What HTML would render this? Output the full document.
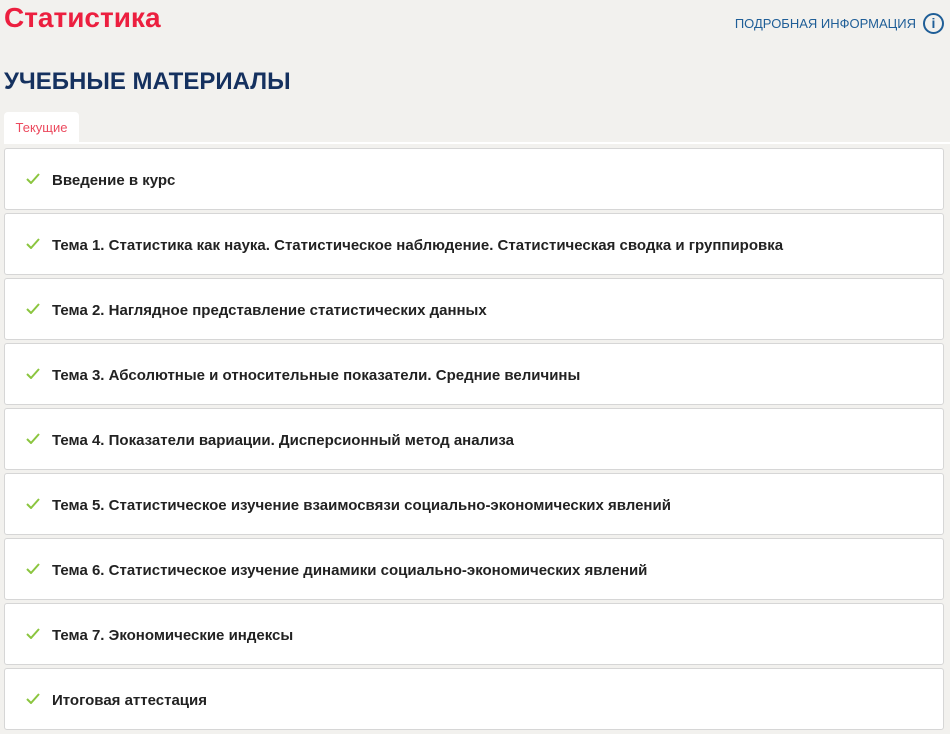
<!DOCTYPE html>
<html><head><meta charset="utf-8"><style>
body{margin:0;background:#f2f1ee;font-family:"Liberation Sans",sans-serif;width:950px;height:734px;overflow:hidden;position:relative}
.t{position:absolute;left:4px;top:2px;font-size:28px;color:#ec1f3f;font-weight:bold;letter-spacing:0px}
.info{position:absolute;right:34px;top:16px;font-size:13px;color:#1f5e97}
.ic{position:absolute;left:923px;top:13px;width:17px;height:17px;border:2px solid #1f5e97;border-radius:50%;color:#1f5e97;font-weight:bold;font-size:14px;text-align:center;line-height:17px}
h1{position:absolute;left:4px;top:68px;margin:0;font-size:24px;color:#15315f;font-weight:bold;letter-spacing:0px}
.tab{position:absolute;left:4px;top:112px;width:75px;height:30px;background:#fff;border-radius:4px 4px 0 0;color:#ec4a5e;font-size:13px;text-align:center;line-height:32px}
.line{position:absolute;left:4px;top:142px;width:946px;height:2px;background:#fff}
.c{position:absolute;left:4px;width:938px;height:60px;background:#fff;border:1px solid #d6d6d6;border-radius:3px;box-sizing:content-box}
.c span{position:absolute;left:47px;top:23px;font-size:15px;color:#222;font-weight:bold}
.c svg{position:absolute;left:21px;top:24px}
</style></head><body>
<div class="t">Статистика</div>
<div class="info">ПОДРОБНАЯ ИНФОРМАЦИЯ</div>
<div class="ic">i</div>
<h1>УЧЕБНЫЕ МАТЕРИАЛЫ</h1>
<div class="tab">Текущие</div>
<div class="line"></div>
<div class="c" style="top:148px"><svg width="14" height="11"><path d="M1 6l4 4 8-9" stroke="#8bc53f" stroke-width="2" fill="none"/></svg><span>Введение в курс</span></div>
<div class="c" style="top:213px"><svg width="14" height="11"><path d="M1 6l4 4 8-9" stroke="#8bc53f" stroke-width="2" fill="none"/></svg><span>Тема 1. Статистика как наука. Статистическое наблюдение. Статистическая сводка и группировка</span></div>
<div class="c" style="top:278px"><svg width="14" height="11"><path d="M1 6l4 4 8-9" stroke="#8bc53f" stroke-width="2" fill="none"/></svg><span>Тема 2. Наглядное представление статистических данных</span></div>
<div class="c" style="top:343px"><svg width="14" height="11"><path d="M1 6l4 4 8-9" stroke="#8bc53f" stroke-width="2" fill="none"/></svg><span>Тема 3. Абсолютные и относительные показатели. Средние величины</span></div>
<div class="c" style="top:408px"><svg width="14" height="11"><path d="M1 6l4 4 8-9" stroke="#8bc53f" stroke-width="2" fill="none"/></svg><span>Тема 4. Показатели вариации. Дисперсионный метод анализа</span></div>
<div class="c" style="top:473px"><svg width="14" height="11"><path d="M1 6l4 4 8-9" stroke="#8bc53f" stroke-width="2" fill="none"/></svg><span>Тема 5. Статистическое изучение взаимосвязи социально-экономических явлений</span></div>
<div class="c" style="top:538px"><svg width="14" height="11"><path d="M1 6l4 4 8-9" stroke="#8bc53f" stroke-width="2" fill="none"/></svg><span>Тема 6. Статистическое изучение динамики социально-экономических явлений</span></div>
<div class="c" style="top:603px"><svg width="14" height="11"><path d="M1 6l4 4 8-9" stroke="#8bc53f" stroke-width="2" fill="none"/></svg><span>Тема 7. Экономические индексы</span></div>
<div class="c" style="top:668px"><svg width="14" height="11"><path d="M1 6l4 4 8-9" stroke="#8bc53f" stroke-width="2" fill="none"/></svg><span>Итоговая аттестация</span></div>
</body></html>
